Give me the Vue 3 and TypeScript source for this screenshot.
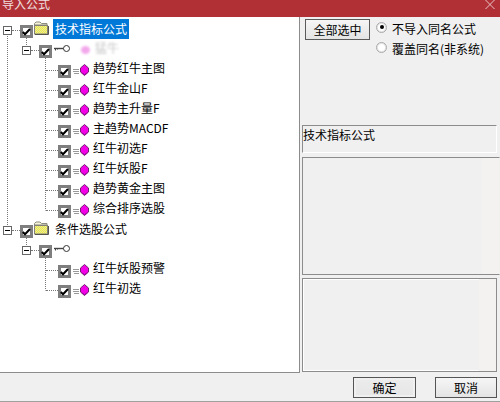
<script setup lang="ts">
interface Row { level: number; kind: 'folder' | 'key' | 'item'; label: string; selected?: boolean; faded?: boolean }
const rows: Row[] = [
  { level: 0, kind: 'folder', label: '技术指标公式', selected: true },
  { level: 1, kind: 'key', label: '猛牛', faded: true },
  { level: 2, kind: 'item', label: '趋势红牛主图' },
  { level: 2, kind: 'item', label: '红牛金山F' },
  { level: 2, kind: 'item', label: '趋势主升量F' },
  { level: 2, kind: 'item', label: '主趋势MACDF' },
  { level: 2, kind: 'item', label: '红牛初选F' },
  { level: 2, kind: 'item', label: '红牛妖股F' },
  { level: 2, kind: 'item', label: '趋势黄金主图' },
  { level: 2, kind: 'item', label: '综合排序选股' },
  { level: 0, kind: 'folder', label: '条件选股公式' },
  { level: 1, kind: 'key', label: '' },
  { level: 2, kind: 'item', label: '红牛妖股预警' },
  { level: 2, kind: 'item', label: '红牛初选' },
]
const guides: [number, number, number, number][] = [
  [7.5, 17, 7.5, 208],
  [26.5, 21, 26.5, 28],
  [45.5, 41, 45.5, 193.5],
  [26.5, 221, 26.5, 228],
  [45.5, 241, 45.5, 273.5],
]
</script>

<template>
  <div class="dialog">
    <header class="titlebar">
      <span class="title">导入公式</span>
      <svg class="close" width="10" height="10" viewBox="0 0 10 10"><path d="M0.5 0L9.5 9M9.5 0L0.5 9" stroke="#e8c4c6" fill="none" /></svg>
    </header>
    <div class="main">
      <section class="tree">
        <svg class="guides" width="60" height="300">
          <line v-for="(g, i) in guides" :key="i" :x1="g[0]" :y1="g[1]" :x2="g[2]" :y2="g[3]" stroke="#777" stroke-dasharray="1 1" />
        </svg>
        <div v-for="(r, i) in rows" :key="i" class="row" :class="'lv' + r.level">
          <span v-if="r.level < 2" class="exp"><i></i></span>
          <span class="dash"></span>
          <span class="check">
            <svg width="9" height="8" viewBox="0 0 9 8"><path d="M0.8 4L3 6.3L8 1" stroke="#000" stroke-width="2" fill="none" /></svg>
          </span>
          <svg v-if="r.kind === 'folder'" class="ico folder" width="15" height="14" viewBox="0 0 15 14">
            <defs>
              <pattern id="dither" width="2" height="2" patternUnits="userSpaceOnUse">
                <rect width="2" height="2" fill="#f2ee3c" />
                <rect width="1" height="1" fill="#e4e4a8" />
                <rect x="1" y="1" width="1" height="1" fill="#e4e4a8" />
              </pattern>
            </defs>
            <path d="M0.5 13V2.5L2 1H6L7.5 2.5H13V4H0.5" fill="#f4f2d8" stroke="#8c8c80" />
            <rect x="0.5" y="4.5" width="13" height="8.5" fill="url(#dither)" stroke="#808078" />
            <path d="M1 13.5H14.5V5" stroke="#55554f" fill="none" />
          </svg>
          <svg v-else-if="r.kind === 'key'" class="ico key" width="16" height="9" viewBox="0 0 16 9">
            <circle cx="12.5" cy="4.5" r="3" fill="#fff" stroke="#333" />
            <path d="M0 4.5H9.5" stroke="#444" stroke-width="1.4" fill="none" />
            <path d="M1.5 4V6.5M3.5 4V5.5" stroke="#444" fill="none" />
          </svg>
          <svg v-else class="ico cube" width="17" height="12" viewBox="0 0 17 12">
            <path d="M0 5.5H6M0 7.5H6M1 9.5H6" stroke="#999" fill="none" />
            <path d="M7.5 4L11.5 0.5L15.5 4V8L11.5 11.5L7.5 8Z" fill="#f400e8" stroke="#70206c" />
            <path d="M8.5 8.5L11.5 10.5L14.5 8.5" stroke="#a000a0" fill="none" />
          </svg>
          <span v-if="r.faded" class="smudge"></span>
          <span class="label" :class="{ sel: r.selected, faded: r.faded }">{{ r.label }}</span>
        </div>
      </section>
      <aside class="side">
        <div class="options">
          <button class="btn select-all">全部选中</button>
          <div class="radios">
            <label class="radio"><span class="dot on"></span>不导入同名公式</label>
            <label class="radio"><span class="dot"></span>覆盖同名(非系统)</label>
          </div>
        </div>
        <div class="box info">技术指标公式</div>
        <div class="box mid"><span class="strip"></span></div>
        <div class="box low"><span class="strip"></span></div>
      </aside>
    </div>
    <footer class="footer">
      <button class="btn foot ok">确定</button>
      <button class="btn foot cancel">取消</button>
    </footer>
  </div>
</template>

<style>
html, body { margin: 0; padding: 0; }
</style>

<style scoped>
.dialog {
  width: 500px;
  height: 402px;
  display: flex;
  flex-direction: column;
  background: #f0f0f0;
  font-family: "Noto Sans CJK SC", "Liberation Sans", sans-serif;
  font-size: 12px;
  color: #000;
  overflow: hidden;
  box-sizing: border-box;
  border-bottom: 1px solid #a0a0a0;
}
.titlebar {
  height: 17px;
  flex: none;
  background: #b03035;
  overflow: hidden;
  display: flex;
  justify-content: space-between;
}
.title {
  font-size: 12px;
  line-height: 12px;
  margin: -2px 0 0 2px;
  color: #f0e0e0;
  height: 14px;
}
.close { margin-right: 5px; }
.main { flex: none; height: 356px; display: flex; }
.tree {
  position: relative;
  width: 300px;
  height: 356px;
  box-sizing: border-box;
  background: #fff;
  border-right: 1px solid #8c8c8c;
  border-bottom: 1px solid #8c8c8c;
  padding-top: 3px;
  flex: none;
  overflow: hidden;
}
.guides { position: absolute; left: 0; top: 0; }
.row {
  height: 20px;
  display: flex;
  align-items: center;
  position: relative;
}
.lv0 { padding-left: 3px; }
.lv1 { padding-left: 22px; }
.lv2 { padding-left: 46px; }
.exp {
  width: 9px;
  height: 9px;
  box-sizing: border-box;
  border: 1px solid #666;
  background: #fff;
  display: flex;
  align-items: center;
  justify-content: center;
  flex: none;
}
.exp i { width: 5px; height: 1px; background: #000; }
.dash {
  width: 8px;
  height: 0;
  border-top: 1px dotted #777;
  flex: none;
}
.lv2 .dash { width: 12px; }
.check {
  width: 13px;
  height: 13px;
  box-sizing: border-box;
  border: 3px solid #7e7e7e;
  background: #fff;
  flex: none;
  display: flex;
  align-items: center;
  justify-content: center;
  position: relative;
  top: 1.5px;
}
.check svg { flex: none; }
.ico { flex: none; }
.folder { margin-left: 1px; position: relative; top: -2px; }
.key { margin-left: 2px; position: relative; top: -2px; }
.cube { margin-left: 2px; position: relative; }
.label {
  line-height: 20px;
  margin-left: 3px;
  white-space: nowrap;
  position: relative;
  top: -2px;
}
.folder + .label { margin-left: 4px; padding: 0 2px; top: -1px; }
.sel { background: #0078d7; color: #fff; }
.smudge {
  width: 9px;
  height: 8px;
  margin-left: 11px;
  background: #f3a8ec;
  border-radius: 50%;
  filter: blur(1.2px);
}
.faded { color: #c8c8c8; filter: blur(0.8px); margin-left: 5px; }
.side { flex: 1; min-width: 0; display: flex; flex-direction: column; padding-left: 2px; }
.options { height: 108px; flex: none; display: flex; align-items: flex-start; padding: 2px 0 0 3px; box-sizing: border-box; }
.btn {
  font: inherit;
  font-size: 12px;
  color: #000;
  padding: 0;
  box-sizing: border-box;
  border: 1px solid #5a5a5a;
  background: linear-gradient(#f6f6f6, #e4e4e4);
}
.select-all { width: 65px; height: 21px; }
.radios { margin: -1px 0 0 6px; display: flex; flex-direction: column; }
.radio { height: 20px; display: flex; align-items: center; gap: 5px; white-space: nowrap; position: relative; }
.dot {
  width: 11px;
  height: 11px;
  box-sizing: border-box;
  border-radius: 50%;
  background: #fff;
  border: 1px solid #a8a8a8;
  box-shadow: inset 0 0 0 1px #e4e4e4;
  display: flex;
  align-items: center;
  justify-content: center;
  position: relative;
  top: -1px;
}
.dot.on::after { content: ""; width: 4px; height: 4px; border-radius: 50%; background: #000; }
.box {
  box-sizing: border-box;
  border: 1px solid;
  border-color: #8c8c8c #fff #fff #8c8c8c;
  position: relative;
  overflow: hidden;
  flex: none;
}
.info { width: 195px; height: 28px; line-height: 18px; }
.mid { width: 198px; height: 118px; margin-top: 4px; border-color: #8c8c8c #f0f0f0 #8c8c8c #8c8c8c; }
.low { width: 195px; height: 94px; margin-top: 3px; border-color: #8c8c8c; box-shadow: inset 0 0 0 1px #fff; }
.strip { position: absolute; top: 0; bottom: 0; right: 0; width: 17px; background: #f3f2f0; }
.footer { flex: 1; display: flex; padding: 4px 3px 0 0; justify-content: flex-end; gap: 19px; align-items: flex-start; }
.foot { width: 63px; height: 21px; font-size: 12px; border: 1px solid #555; }
.cancel { width: 62px; }
.ok { background: linear-gradient(#ececec, #e6e6e6); box-shadow: inset 0 0 0 2px #f0f0f0; }
</style>
